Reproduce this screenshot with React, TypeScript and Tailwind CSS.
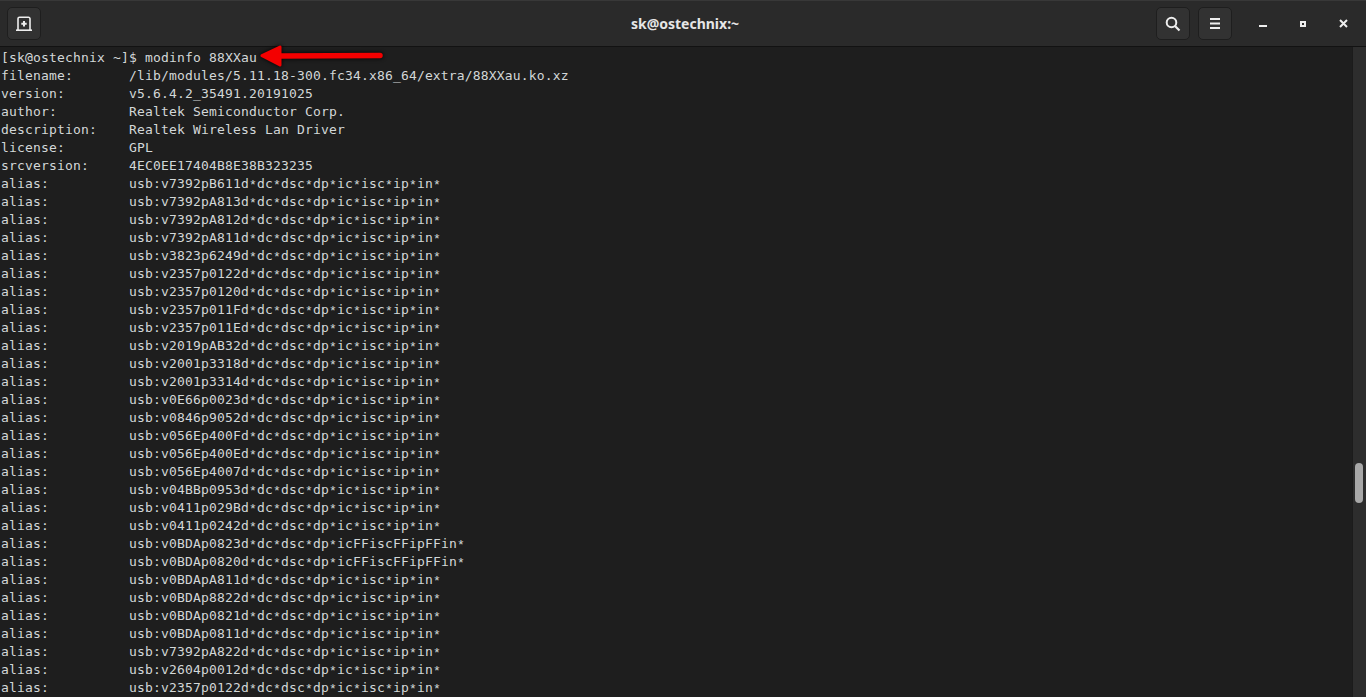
const usbIds = [
  "v7392pB611", "v7392pA813", "v7392pA812", "v7392pA811", "v3823p6249", "v2357p0122",
  "v2357p0120", "v2357p011F", "v2357p011E", "v2019pAB32", "v2001p3318", "v2001p3314",
  "v0E66p0023", "v0846p9052", "v056Ep400F", "v056Ep400E", "v056Ep4007", "v04BBp0953",
  "v0411p029B", "v0411p0242", "v0BDAp0823", "v0BDAp0820", "v0BDApA811", "v0BDAp8822",
  "v0BDAp0821", "v0BDAp0811", "v7392pA822", "v2604p0012", "v2357p0122",
];

const info = [
  ["filename:", "/lib/modules/5.11.18-300.fc34.x86_64/extra/88XXau.ko.xz"],
  ["version:", "v5.6.4.2_35491.20191025"],
  ["author:", "Realtek Semiconductor Corp."],
  ["description:", "Realtek Wireless Lan Driver"],
  ["license:", "GPL"],
  ["srcversion:", "4EC0EE17404B8E38B323235"],
];

function aliasValue(id: string) {
  const rest = id === "v0BDAp0823" || id === "v0BDAp0820" ? "icFFiscFFipFFin*" : "ic*isc*ip*in*";
  return `usb:${id}d*dc*dsc*dp*${rest}`;
}

function HeaderButton({ children }: { children: React.ReactNode }) {
  return (
    <button
      type="button"
      className="flex h-[33px] w-[34px] items-center justify-center rounded-[5px] border border-[#1e1e1e] bg-[#323232] text-[#eeeeee]"
    >
      {children}
    </button>
  );
}

// the asterisks sit low and small in the terminal font
function Value({ text }: { text: string }) {
  const parts = text.split("*");
  return (
    <span>
      {parts.map((part, i) => (
        <span key={i}>
          {part}
          {i < parts.length - 1 && (
            <span className="relative top-[1px] font-['Liberation_Mono',monospace] text-[13px] tracking-[0.2px]">*</span>
          )}
        </span>
      ))}
    </span>
  );
}

function OutputLine({ label, value }: { label: string; value: string }) {
  return (
    <div className="flex h-[18px]">
      <span className="w-[128px] shrink-0">{label}</span>
      <Value text={value} />
    </div>
  );
}

export default function App() {
  return (
    <div className="flex h-[697px] w-[1366px] flex-col overflow-hidden bg-[#1e1e1e]">
      <header className="flex h-[47px] shrink-0 items-center border-t border-b border-t-[#383838] border-b-[#121212] bg-[#2a2a2a] pl-[7px] pr-[3px]">
        <div className="flex flex-1 justify-start">
          <HeaderButton>
            <svg width="16" height="16" viewBox="0 0 16 16" fill="none">
              <path d="M2 14V2.800A1.500 1.500 0 0 1 3.500 1.300h9A1.500 1.500 0 0 1 14 2.800V14" stroke="#eeeeee" strokeWidth="1.600" />
              <path d="M0 14.200h16" stroke="#eeeeee" strokeWidth="1.600" />
              <path d="M8 5v5.400M5.300 7.700h5.400" stroke="#eeeeee" strokeWidth="2" />
            </svg>
          </HeaderButton>
        </div>
        <div className="font-['Noto_Sans',sans-serif] text-[14px] font-bold text-[#e6e6e6]">sk@ostechnix:~</div>
        <div className="flex flex-1 items-center justify-end">
          <div className="flex gap-[8px]">
            <HeaderButton>
              <svg width="16" height="16" viewBox="0 0 16 16" fill="none">
                <circle cx="6.500" cy="6.500" r="4.800" stroke="#eeeeee" strokeWidth="2" />
                <path d="M10 10l4.500 4.500" stroke="#eeeeee" strokeWidth="2.200" />
              </svg>
            </HeaderButton>
            <HeaderButton>
              <svg width="10" height="11" viewBox="0 0 10 11" fill="#eeeeee">
                <rect x="0" y="0" width="10" height="2" />
                <rect x="0" y="4.500" width="10" height="2" />
                <rect x="0" y="9" width="10" height="2" />
              </svg>
            </HeaderButton>
          </div>
          <div className="ml-[11px] flex h-[33px] w-[40px] items-center justify-center">
            <div className="mt-[5px] h-[2px] w-[8px] bg-[#eeeeee]" />
          </div>
          <div className="flex h-[33px] w-[40px] items-center justify-center">
            <div className="h-[6px] w-[6px] border-2 border-[#eeeeee]" />
          </div>
          <div className="flex h-[33px] w-[40px] items-center justify-center">
            <svg width="9" height="9" viewBox="0 0 9 9">
              <path d="M1 1l7 7M8 1l-7 7" stroke="#eeeeee" strokeWidth="2" />
            </svg>
          </div>
        </div>
      </header>

      <main className="relative flex min-h-0 flex-1">
        <div className="min-w-0 flex-1 overflow-hidden whitespace-pre pl-px pt-[2px] font-['DejaVu_Sans_Mono',monospace] text-[13px] leading-[18px] tracking-[0.17px] text-[#d3d7d8]">
          <div className="h-[18px]">[sk@ostechnix ~]$ modinfo 88XXau</div>
          {info.map(([label, value]) => (
            <OutputLine key={label} label={label} value={value} />
          ))}
          {usbIds.map((id, i) => (
            <OutputLine key={i} label="alias:" value={aliasValue(id)} />
          ))}
        </div>
        <div className="w-[14px] shrink-0 border-l border-[#1b1b1b] bg-[#2d2d2d] pl-[2px] pt-[416px]">
          <div className="h-[40px] w-[8px] rounded-full bg-[#a8a8a8]" />
        </div>
        <svg
          className="absolute left-[255px] top-[-4px] drop-shadow-[0_0_2px_#000000]"
          width="132"
          height="26"
          viewBox="0 0 132 26"
        >
          <path d="M7 12.700L25 4L25 22Z" fill="#f40000" stroke="#f40000" strokeWidth="3" strokeLinejoin="round" />
          <path d="M25 13L125 12.600" stroke="#f40000" strokeWidth="5.500" strokeLinecap="round" />
        </svg>
      </main>
    </div>
  );
}
